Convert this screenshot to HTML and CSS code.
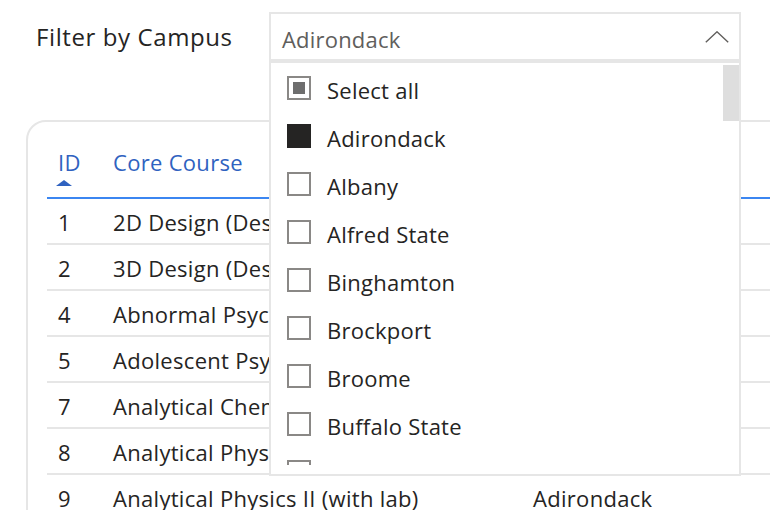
FILE: index.html
```html
<!DOCTYPE html>
<html>
<head>
<meta charset="utf-8">
<link rel="stylesheet" href="styles.css">
</head>
<body>
<div class="page">
  <div class="filter-row">
    <span class="filter-label">Filter by Campus</span>
    <div class="dropdown">
      <div class="dd-header">
        <span class="dd-value">Adirondack</span>
        <svg class="chevron" width="24" height="12" viewBox="0 0 24 12"><polyline points="0.8,11.2 12,0.8 23.2,11.2" fill="none" stroke="#605e5c" stroke-width="1.4"/></svg>
      </div>
      <div class="dd-panel">
        <div class="dd-list">
          <div class="dd-item"><span class="cb cb-partial"><span class="cb-dot"></span></span><span class="dd-text">Select all</span></div>
          <div class="dd-item"><span class="cb cb-checked"></span><span class="dd-text">Adirondack</span></div>
          <div class="dd-item"><span class="cb"></span><span class="dd-text">Albany</span></div>
          <div class="dd-item"><span class="cb"></span><span class="dd-text">Alfred State</span></div>
          <div class="dd-item"><span class="cb"></span><span class="dd-text">Binghamton</span></div>
          <div class="dd-item"><span class="cb"></span><span class="dd-text">Brockport</span></div>
          <div class="dd-item"><span class="cb"></span><span class="dd-text">Broome</span></div>
          <div class="dd-item"><span class="cb"></span><span class="dd-text">Buffalo State</span></div>
          <div class="dd-item"><span class="cb"></span></div>
        </div>
        <div class="thumb"></div>
      </div>
    </div>
  </div>

  <div class="card">
    <table class="grid">
      <colgroup><col class="c-id"><col class="c-course"><col class="c-campus"></colgroup>
      <thead>
        <tr>
          <th><div class="th-text">ID</div><div class="sort-arrow"></div></th>
          <th><div class="th-text">Core Course</div></th>
          <th><div class="th-text">Campus</div></th>
        </tr>
      </thead>
      <tbody>
        <tr><td>1</td><td>2D Design (Design I)</td><td>Adirondack</td></tr>
        <tr><td>2</td><td>3D Design (Design II)</td><td>Adirondack</td></tr>
        <tr><td>4</td><td>Abnormal Psychology</td><td>Adirondack</td></tr>
        <tr><td>5</td><td>Adolescent Psychology</td><td>Adirondack</td></tr>
        <tr><td>7</td><td>Analytical Chemistry</td><td>Adirondack</td></tr>
        <tr><td>8</td><td>Analytical Physics I (with lab)</td><td>Adirondack</td></tr>
        <tr><td>9</td><td>Analytical Physics II (with lab)</td><td>Adirondack</td></tr>
      </tbody>
    </table>
  </div>
</div>
</body>
</html>
```

FILE: styles.css
```css
html, body {
  margin: 0;
  padding: 0;
  background: #ffffff;
  overflow: hidden;
}
body {
  font-family: "Open Sans", "Noto Sans", sans-serif;
  color: #252423;
  width: 770px;
  height: 510px;
}
.page {
  width: 770px;
  height: 510px;
  overflow: hidden;
}
.filter-row {
  display: flex;
  align-items: flex-start;
  padding-top: 12px;
}
.filter-label {
  width: 233px;
  padding-left: 36px;
  font-size: 24px;
  letter-spacing: 0.6px;
  line-height: 50px;
  color: #252423;
  white-space: nowrap;
  flex: none;
}
.dropdown {
  position: relative;
  width: 472px;
  flex: none;
}
.dd-header {
  box-sizing: border-box;
  height: 49px;
  border: 2px solid #e6e6e6;
  display: flex;
  align-items: center;
  justify-content: space-between;
  padding: 0 10px 0 11px;
}
.dd-value {
  font-size: 22px;
  letter-spacing: 0.2px;
  color: #605e5c;
  padding-top: 4px;
}
.chevron {
  display: block;
}
.dd-panel {
  position: absolute;
  top: 49px;
  left: 0;
  right: 0;
  box-sizing: border-box;
  height: 415px;
  border: 2px solid #e6e6e6;
  background: #fff;
  padding: 1px 0 9px 0;
  z-index: 5;
}
.dd-list {
  height: 401px;
  overflow: hidden;
}
.dd-item {
  height: 48px;
  display: flex;
  align-items: center;
  gap: 16px;
  padding-left: 16px;
  font-size: 22px;
  letter-spacing: 0.25px;
  color: #252423;
}
.dd-text {
  padding-top: 3px;
}
.cb {
  box-sizing: border-box;
  width: 24px;
  height: 24px;
  border: 2px solid #8a8886;
  background: #fff;
  flex: none;
  display: flex;
  align-items: center;
  justify-content: center;
}
.cb-checked {
  background: #252423;
  border-color: #252423;
}
.cb-dot {
  width: 12px;
  height: 12px;
  background: #6e6e6e;
}
.thumb {
  position: absolute;
  top: 2px;
  right: 0;
  width: 16px;
  height: 56px;
  background: #dedede;
}
.card {
  margin-top: 58px;
  margin-left: 26px;
  width: 900px;
  height: 600px;
  box-sizing: border-box;
  border: 2px solid #e6e6e6;
  border-radius: 20px;
  padding: 0 0 0 19px;
}
.grid {
  border-collapse: collapse;
  table-layout: fixed;
  width: 800px;
  font-size: 22px;
  letter-spacing: 0.3px;
}
.c-id { width: 55px; }
.c-course { width: 420px; }
.c-campus { width: 325px; }
.grid th {
  text-align: left;
  vertical-align: top;
  font-weight: normal;
  color: #2f62c0;
  padding: 27px 0 11px 11px;
  border-bottom: 2px solid #3b86f1;
}
.th-text {
  line-height: 26px;
  white-space: nowrap;
}
.sort-arrow {
  width: 0;
  height: 0;
  margin-top: 5px;
  margin-left: -2px;
  border-left: 8px solid transparent;
  border-right: 8px solid transparent;
  border-bottom: 6px solid #2f62c0;
}
.grid td {
  height: 42px;
  padding: 2px 0 0 11px;
  border-bottom: 2px solid #e6e6e6;
  white-space: nowrap;
  overflow: hidden;
  vertical-align: middle;
  line-height: 26px;
}
```
